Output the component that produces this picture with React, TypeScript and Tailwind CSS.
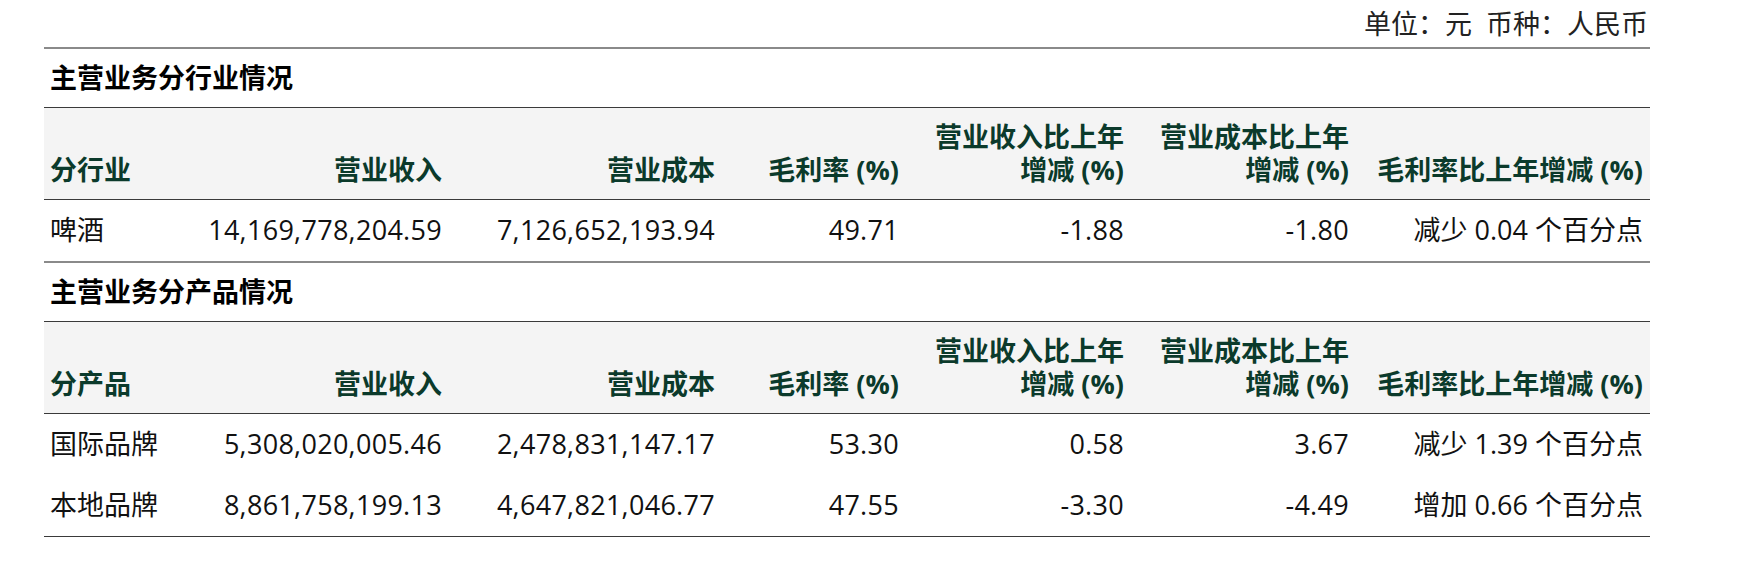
const cols = "grid grid-cols-[146px_258px_273px_184px_225px_225px_295px]";

const sections = [
  {
    title: "主营业务分行业情况",
    first: "分行业",
    rows: [
      ["啤酒", "14,169,778,204.59", "7,126,652,193.94", "49.71", "-1.88", "-1.80", "减少 0.04 个百分点"],
    ],
  },
  {
    title: "主营业务分产品情况",
    first: "分产品",
    rows: [
      ["国际品牌", "5,308,020,005.46", "2,478,831,147.17", "53.30", "0.58", "3.67", "减少 1.39 个百分点"],
      ["本地品牌", "8,861,758,199.13", "4,647,821,046.77", "47.55", "-3.30", "-4.49", "增加 0.66 个百分点"],
    ],
  },
];

function HeaderRow({ first }: { first: string }) {
  return (
    <div
      className={`${cols} h-[93px] items-end border-t-[1.5px] border-b-[1.5px] border-[#3a3a3a] bg-[#f4f4f4] pb-[13px] font-bold leading-[33px] text-[#0b3a2b]`}
    >
      <div className="pl-[6px]">{first}</div>
      <div className="pr-[6px] text-right">营业收入</div>
      <div className="pr-[6px] text-right">营业成本</div>
      <div className="pr-[6px] text-right">毛利率 (%)</div>
      <div className="pr-[6px] text-right">
        营业收入比上年
        <br />
        增减 (%)
      </div>
      <div className="pr-[6px] text-right">
        营业成本比上年
        <br />
        增减 (%)
      </div>
      <div className="pr-[7px] text-right">毛利率比上年增减 (%)</div>
    </div>
  );
}

export default function App() {
  return (
    <div
      className="min-h-[565px] bg-white text-[27px] text-[#111]"
      style={{ fontFamily: '"Open Sans", "Noto Sans CJK SC", sans-serif' }}
    >
      <div className="ml-[44px] w-[1606px]">
        <div className="h-[47px] pt-[7px] pr-[2px] text-right leading-[33px] text-[#222]">
          单位：元&nbsp;&nbsp;币种：人民币
        </div>
        {sections.map((s, si) => (
          <div key={si}>
            <div className="flex h-[60px] items-center border-t-2 border-[#8a8a8a] pl-[6px] font-bold text-black">
              {s.title}
            </div>
            <HeaderRow first={s.first} />
            <div className={si === sections.length - 1 ? "border-b-[1.5px] border-[#3a3a3a]" : ""}>
              {s.rows.map((r, ri) => (
                <div key={ri} className={`${cols} h-[61px] items-center`}>
                  {r.map((c, ci) => (
                    <div
                      key={ci}
                      className={
                        ci === 0
                          ? "pl-[6px]"
                          : ci === 6
                            ? "pr-[7px] text-right"
                            : "pr-[6px] text-right tracking-[0.3px]"
                      }
                    >
                      {c}
                    </div>
                  ))}
                </div>
              ))}
            </div>
          </div>
        ))}
      </div>
    </div>
  );
}
